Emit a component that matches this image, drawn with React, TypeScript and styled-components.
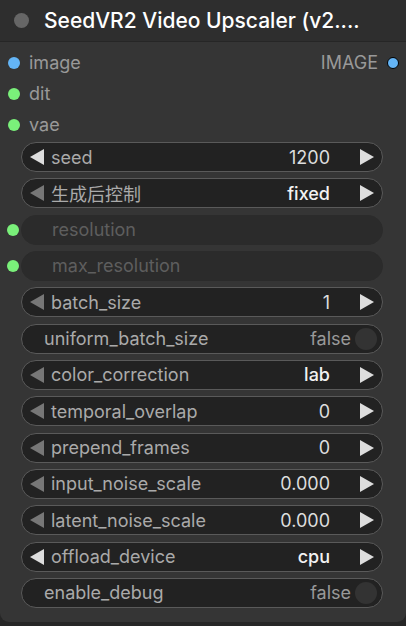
import React from 'react';
import styled, { createGlobalStyle } from 'styled-components';

const GlobalStyle = createGlobalStyle`
  html, body {
    margin: 0;
    padding: 0;
    background: #262626;
  }
  body {
    font-family: Inter, "Noto Sans CJK SC", sans-serif;
  }
`;

const Node = styled.div`
  width: 406px;
  height: 622px;
  background: #353535;
  border-radius: 0 0 9px 9px;
  overflow: hidden;
  display: flex;
  flex-direction: column;
`;

const TitleBar = styled.div`
  height: 42px;
  background: #2e2e2e;
  border-bottom: 1px solid #262626;
  display: flex;
  align-items: center;
  gap: 15px;
  padding-left: 14px;
  box-sizing: border-box;
`;

const TitleDot = styled.span`
  width: 15px;
  height: 15px;
  border-radius: 50%;
  background: #666;
`;

const Title = styled.span`
  color: #fff;
  font-size: 21px;
  font-weight: 500;
  white-space: nowrap;
`;

const Body = styled.div`
  display: flex;
  flex-direction: column;
  padding-top: 5px;
`;

const SlotRow = styled.div`
  height: 31px;
  display: flex;
  align-items: center;
  padding: 0 7px 0 8px;
  font-size: 18px;
  color: #999;
`;

const Dot = styled.span<{ color: string; outlined?: boolean }>`
  width: 12px;
  height: 12px;
  border-radius: 50%;
  background: ${({ color }) => color};
  box-sizing: border-box;
  border: ${({ outlined }) => (outlined ? '1.5px solid #000' : 'none')};
  flex-shrink: 0;
`;

const SlotLabel = styled.span`
  margin-left: 9px;
  flex: 1;
`;

const OutLabel = styled.span`
  margin-right: 9px;
`;

const Widgets = styled.div`
  display: flex;
  flex-direction: column;
  gap: 6.33px;
  margin-top: 2px;
`;

const WidgetRow = styled.div`
  display: flex;
  align-items: center;
  padding-left: 7px;
  height: 30px;
`;

const Pill = styled.div<{ disabled?: boolean; offset?: number }>`
  margin-left: ${({ offset }) => offset ?? 14}px;
  width: 362px;
  height: 30px;
  box-sizing: border-box;
  border-radius: 15px;
  background: ${({ disabled }) => (disabled ? '#2b2b2b' : '#222')};
  border: 1px solid ${({ disabled }) => (disabled ? '#2b2b2b' : '#5a5a5a')};
  display: flex;
  align-items: center;
  font-size: 18px;
  padding: 0 8px;
`;

const Arrow = styled.span<{ active?: boolean; dir: 'left' | 'right' }>`
  width: 0;
  height: 0;
  border-top: 8px solid transparent;
  border-bottom: 8px solid transparent;
  ${({ dir, active }) =>
    dir === 'left'
      ? `border-right: 14px solid ${active ? '#ddd' : '#777'};`
      : `border-left: 14px solid #ddd;`}
  flex-shrink: 0;
`;

const Label = styled.span<{ disabled?: boolean; indent?: number }>`
  color: ${({ disabled }) => (disabled ? '#5e5e5e' : '#aaa')};
  margin-left: ${({ indent }) => indent ?? 7}px;
  flex: 1;
  white-space: nowrap;
`;

const Value = styled.span<{ muted?: boolean; bright?: boolean }>`
  color: ${({ muted, bright }) => (muted ? '#999' : bright ? '#f2f2f2' : '#ddd')};
  font-weight: ${({ bright }) => (bright ? 500 : 400)};
  margin-right: ${({ muted }) => (muted ? 4 : 30)}px;
`;

const Knob = styled.span`
  width: 22px;
  height: 22px;
  border-radius: 50%;
  background: #333;
  margin-right: -3px;
`;

type W =
  | { kind: 'num'; label: string; value: string; active?: boolean; combo?: boolean }
  | { kind: 'bool'; label: string; value: string }
  | { kind: 'input'; label: string };

const widgets: W[] = [
  { kind: 'num', label: 'seed', value: '1200', active: true },
  { kind: 'num', label: '生成后控制', value: 'fixed', combo: true },
  { kind: 'input', label: 'resolution' },
  { kind: 'input', label: 'max_resolution' },
  { kind: 'num', label: 'batch_size', value: '1' },
  { kind: 'bool', label: 'uniform_batch_size', value: 'false' },
  { kind: 'num', label: 'color_correction', value: 'lab', combo: true },
  { kind: 'num', label: 'temporal_overlap', value: '0' },
  { kind: 'num', label: 'prepend_frames', value: '0' },
  { kind: 'num', label: 'input_noise_scale', value: '0.000' },
  { kind: 'num', label: 'latent_noise_scale', value: '0.000' },
  { kind: 'num', label: 'offload_device', value: 'cpu', active: true, combo: true },
  { kind: 'bool', label: 'enable_debug', value: 'false' },
];

const GREEN = '#7af07a';
const BLUE = '#64b5f6';

export default function App() {
  return (
    <>
      <GlobalStyle />
      <Node>
        <TitleBar>
          <TitleDot />
          <Title>SeedVR2 Video Upscaler (v2....</Title>
        </TitleBar>
        <Body>
          <SlotRow>
            <Dot color={BLUE} />
            <SlotLabel>image</SlotLabel>
            <OutLabel>IMAGE</OutLabel>
            <Dot color={BLUE} outlined />
          </SlotRow>
          <SlotRow>
            <Dot color={GREEN} />
            <SlotLabel>dit</SlotLabel>
          </SlotRow>
          <SlotRow>
            <Dot color={GREEN} />
            <SlotLabel>vae</SlotLabel>
          </SlotRow>
          <Widgets>
            {widgets.map((w) => (
              <WidgetRow key={w.label}>
                {w.kind === 'input' ? (
                  <>
                    <Dot color={GREEN} />
                    <Pill disabled offset={2}>
                      <Label disabled indent={22}>
                        {w.label}
                      </Label>
                    </Pill>
                  </>
                ) : w.kind === 'bool' ? (
                  <Pill>
                    <Label indent={14}>{w.label}</Label>
                    <Value muted>{w.value}</Value>
                    <Knob />
                  </Pill>
                ) : (
                  <Pill>
                    <Arrow dir="left" active={w.active} />
                    <Label>{w.label}</Label>
                    <Value bright={w.combo}>{w.value}</Value>
                    <Arrow dir="right" />
                  </Pill>
                )}
              </WidgetRow>
            ))}
          </Widgets>
        </Body>
      </Node>
    </>
  );
}
